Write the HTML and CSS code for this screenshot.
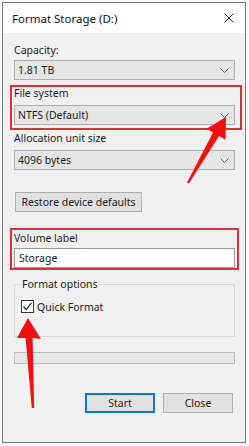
FILE: index.html
```html
<!DOCTYPE html>
<html>
<head>
<meta charset="utf-8">
<link rel="stylesheet" href="styles.css">
</head>
<body>
<div class="window">
  <div class="titlebar">
    <span class="title">Format Storage (D:)</span>
    <svg class="close" width="10" height="10" viewBox="0 0 10 10"><path d="M0.5 0.5L9.5 9.5M9.5 0.5L0.5 9.5" stroke="#333" stroke-width="1" fill="none"/></svg>
  </div>
  <div class="content">
    <div class="label l-cap">Capacity:</div>
    <div class="select s1"><span>1.81 TB</span><svg class="chev" width="9" height="5" viewBox="0 0 9 5"><path d="M0.5 0.5L4.5 4.5L8.5 0.5" stroke="#666" fill="none"/></svg></div>
    <div class="label l-fs">File system</div>
    <div class="select s2"><span>NTFS (Default)</span><svg class="chev" width="9" height="5" viewBox="0 0 9 5"><path d="M0.5 0.5L4.5 4.5L8.5 0.5" stroke="#666" fill="none"/></svg></div>
    <div class="label l-al">Allocation unit size</div>
    <div class="select s3"><span>4096 bytes</span><svg class="chev" width="9" height="5" viewBox="0 0 9 5"><path d="M0.5 0.5L4.5 4.5L8.5 0.5" stroke="#666" fill="none"/></svg></div>
    <div class="btn restore">Restore device defaults</div>
    <div class="label l-vol">Volume label</div>
    <div class="input">Storage</div>
    <fieldset class="group">
      <legend>Format options</legend>
      <div class="check">
        <span class="box"><svg width="11" height="11" viewBox="0 0 11 11"><path d="M1.5 5.5L4.2 8.5L9.5 1.8" stroke="#222" stroke-width="1.2" fill="none"/></svg></span>
        <span>Quick Format</span>
      </div>
    </fieldset>
    <div class="progress"></div>
    <div class="actions">
      <div class="btn start">Start</div>
      <div class="btn close-btn">Close</div>
    </div>
  </div>
</div>
<div class="hl hl1"></div>
<div class="hl hl2"></div>
<svg class="arrows" width="249" height="446" viewBox="0 0 249 446">
  <polygon fill="#f01010" points="226,117 225.5,139.8 219,136 188.9,183.5 187.1,182.5 213,132.5 206.5,128.8"/>
  <polygon fill="#f01010" points="28,318 41,339 32.6,338 34.2,408 31.8,408 25.6,338 17,338"/>
</svg>
</body>
</html>
```

FILE: styles.css
```css
* { box-sizing: border-box; }
html, body { margin: 0; padding: 0; background: #ffffff; }
body {
  position: relative;
  width: 249px;
  height: 446px;
  font-family: "Noto Sans", "Open Sans", sans-serif;
  font-size: 10.5px;
  color: #1a1a1a;
}
.window {
  position: absolute;
  left: 2px;
  top: 2px;
  width: 244px;
  height: 441px;
  border: 1px solid #7a7a7a;
  background: #f0f0f0;
  display: flex;
  flex-direction: column;
}
.titlebar {
  height: 30px;
  background: #ffffff;
  display: flex;
  align-items: center;
  justify-content: space-between;
  padding: 0 11px 0 9px;
  flex: none;
}
.title { font-size: 11.5px; color: #111; }
.content {
  padding: 0 10px 0 11px;
  display: flex;
  flex-direction: column;
}
.label { height: 14px; line-height: 14px; }
.l-cap { margin-top: 10px; }
.l-fs { margin-top: 6px; }
.l-al { margin-top: 6px; }
.l-vol { margin-top: 19px; }
.select {
  height: 20px;
  border: 1px solid #adadad;
  background: #e5e5e5;
  display: flex;
  align-items: center;
  justify-content: space-between;
  padding: 0 5px 0 3px;
  margin-top: 4px;
}
.s1 { margin-top: 3px; }
.s2, .s3 { margin-top: 5px; }
.btn {
  height: 20px;
  border: 1px solid #adadad;
  background: #e1e1e1;
  display: flex;
  align-items: center;
  justify-content: center;
}
.restore { width: 127px; margin: 22px 0 0 1px; }
.input {
  height: 20px;
  margin-top: 3px;
  border: 1px solid #9a9a9a;
  background: #ffffff;
  display: flex;
  align-items: center;
  padding-left: 4px;
}
.group {
  margin: 9px 0 0 0;
  height: 60px;
  border: 1px solid #dadada;
  padding: 9px 6px 0 6px;
  min-width: 0;
}
.group legend {
  padding: 0 1px;
  height: 14px;
  line-height: 14px;
}
.check { display: flex; align-items: center; gap: 3px; height: 13px; }
.box {
  width: 13px;
  height: 13px;
  border: 1px solid #333;
  background: #fff;
  display: flex;
  align-items: center;
  justify-content: center;
}
.progress {
  margin-top: 15px;
  height: 12px;
  border: 1px solid #bcbcbc;
  background: #e6e6e6;
}
.actions {
  margin-top: 29px;
  display: flex;
  justify-content: flex-end;
  gap: 8px;
  padding-right: 2px;
}
.actions .btn { width: 70px; height: 20px; }
.start { border: 2px solid #0078d7; }
.hl {
  position: absolute;
  border: 2px solid #d8323a;
}
.hl1 { left: 10px; top: 85px; width: 232px; height: 45px; }
.hl2 { left: 10px; top: 228px; width: 229px; height: 42px; }
.arrows { position: absolute; left: 0; top: 0; }
```
